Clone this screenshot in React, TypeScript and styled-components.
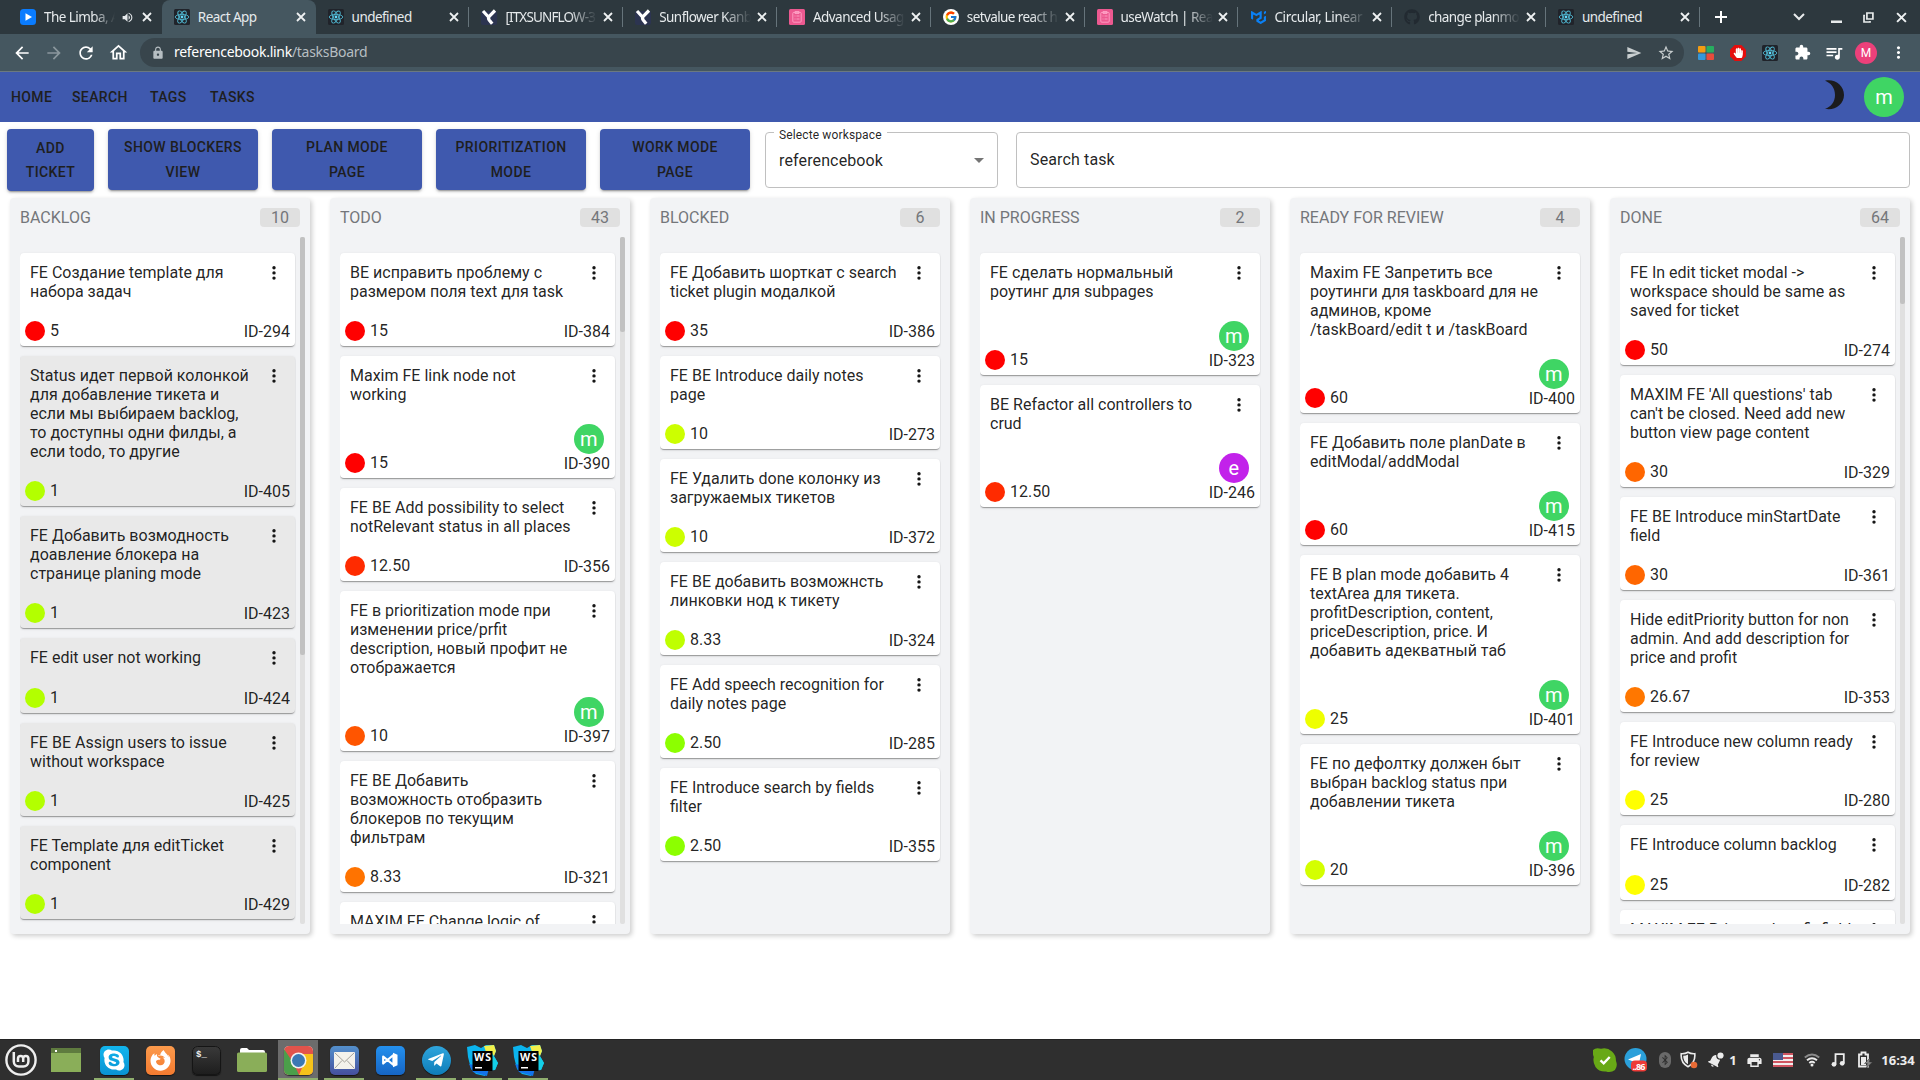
import React from "react";
import styled, { createGlobalStyle } from "styled-components";
import {
  MdArrowBack, MdArrowForward, MdRefresh, MdOutlineHome, MdLock, MdSend, MdStarBorder, MdExtension,
  MdQueueMusic, MdMoreVert, MdVolumeUp, MdArrowDropDown, MdPrint, MdNotifications,
} from "react-icons/md";
import { FaGithub, FaSkype, FaFirefoxBrowser, FaTelegramPlane, FaBluetoothB, FaHandPaper } from "react-icons/fa";
import { FcGoogle } from "react-icons/fc";
import { SiMui } from "react-icons/si";

const Global = createGlobalStyle`
  * { box-sizing: border-box; }
  body { margin: 0; background: #fff; font-family: Roboto, "Noto Sans", sans-serif; overflow: hidden; }
  svg { display: block; flex: none; }
`;

const uiFont = `"Noto Sans", "Open Sans", sans-serif`;

const Screen = styled.div`
  width: 1920px;
  height: 1080px;
  display: flex;
  flex-direction: column;
  background: #fff;
  overflow: hidden;
`;

/* ---------- browser chrome ---------- */

const TabStrip = styled.div`
  height: 34px;
  padding-left: 8px;
  display: flex;
  background: #2d383e;
  font: 13.5px ${uiFont};
  color: #e6eaec;
`;
const TabBox = styled.div<{ $active?: boolean; $line?: boolean }>`
  position: relative;
  width: 153.8px;
  height: 34px;
  padding-left: 12px;
  display: flex;
  align-items: center;
  border-radius: 8px 8px 0 0;
  background: ${(p) => (p.$active ? "#455760" : "transparent")};
  &::after {
    content: "";
    display: ${(p) => (p.$line ? "block" : "none")};
    position: absolute;
    right: 0;
    top: 7px;
    width: 1px;
    height: 20px;
    background: #66747b;
  }
`;
const Favicon = styled.div`
  width: 16px;
  height: 16px;
  margin-right: 8px;
  display: flex;
  align-items: center;
  justify-content: center;
`;
const TabTitle = styled.div<{ $w: number; $fade?: boolean; $ls?: number }>`
  width: ${(p) => p.$w}px;
  line-height: 20px;
  white-space: nowrap;
  letter-spacing: ${(p) => p.$ls ?? -0.55}px;
  mask-image: ${(p) => (p.$fade ? "linear-gradient(90deg, #000 70%, transparent 100%)" : "none")};
`;
const TabAudio = styled.div`
  width: 12px;
  margin-left: 6px;
  margin-right: 8px;
`;
const TabClose = styled.div`
  margin-left: auto;
  margin-right: 10px;
`;
const WindowButtons = styled.div`
  flex: 1;
  display: flex;
  align-items: center;
  color: #f0f2f3;
`;
const WinSlot = styled.div<{ $ml: number }>`
  width: 20px;
  margin-left: ${(p) => p.$ml}px;
  display: flex;
  justify-content: center;
`;

const Toolbar = styled.div`
  height: 38px;
  padding: 4px 6px 4px 6px;
  display: flex;
  align-items: center;
  background: #455760;
  border-bottom: 1px solid #6b7980;
  color: #fff;
`;
const ToolSlot = styled.div<{ $dim?: boolean }>`
  width: 32px;
  display: flex;
  justify-content: center;
  color: ${(p) => (p.$dim ? "#8b979d" : "#fff")};
`;
const Address = styled.div`
  width: 1544px;
  height: 29px;
  margin-left: 6px;
  margin-right: 6px;
  padding: 0 2px 0 11px;
  display: flex;
  align-items: center;
  border-radius: 15px;
  background: #38454c;
  font: 14px/20px ${uiFont};
  color: #b6bec2;
`;
const Url = styled.div`
  flex: 1;
  margin-left: 9px;
  padding-bottom: 2px;
  letter-spacing: -0.28px;
  span { color: #fff; }
`;
const ProfileDot = styled.div`
  width: 22px;
  height: 22px;
  border-radius: 50%;
  background: #ec407a;
  font: 12px/22px Roboto, sans-serif;
  text-align: center;
`;

/* ---------- application ---------- */

const AppBar = styled.div`
  height: 50px;
  padding: 0 16px 0 11px;
  display: flex;
  align-items: center;
  background: #3f59ae;
`;
const NavLink = styled.div<{ $w: number }>`
  width: ${(p) => p.$w}px;
  font: 500 14px/24px Roboto, sans-serif;
  letter-spacing: 0.38px;
  color: #1e1e20;
`;
const Spacer = styled.div`
  flex: 1;
`;
const Avatar = styled.div<{ $size: number; $bg: string; $ml?: number }>`
  width: ${(p) => p.$size}px;
  height: ${(p) => p.$size}px;
  margin-left: ${(p) => p.$ml ?? 0}px;
  border-radius: 50%;
  display: flex;
  align-items: center;
  justify-content: center;
  background: ${(p) => p.$bg};
  color: #fff;
  font-size: 20px;
  line-height: 1;
`;
const MoonBox = styled.div`
  margin: -5px 19px 0 0;
`;

const Controls = styled.div`
  height: 76px;
  padding: 7px 10px 0 7px;
  display: flex;
  align-items: flex-start;
`;
const ActionButton = styled.div<{ $w: number; $h: number; $ml: number }>`
  width: ${(p) => p.$w}px;
  height: ${(p) => p.$h}px;
  margin-left: ${(p) => p.$ml}px;
  display: flex;
  align-items: center;
  justify-content: center;
  border-radius: 4px;
  background: #3f59ae;
  color: #1e1e20;
  font: 500 14px/24.5px Roboto, sans-serif;
  letter-spacing: 0.4px;
  text-align: center;
  white-space: pre-line;
  box-shadow: 0 3px 1px -2px rgba(0, 0, 0, 0.2), 0 2px 2px 0 rgba(0, 0, 0, 0.14), 0 1px 5px 0 rgba(0, 0, 0, 0.12);
`;
const Field = styled.div<{ $w: number; $ml: number; $pb?: number }>`
  position: relative;
  width: ${(p) => p.$w}px;
  height: 56px;
  margin: 3px 0 0 ${(p) => p.$ml}px;
  padding: 0 6px ${(p) => p.$pb ?? 0}px 13px;
  display: flex;
  align-items: center;
  justify-content: space-between;
  border: 1px solid #c0c0c0;
  border-radius: 4px;
  font-size: 16px;
  letter-spacing: 0.13px;
  color: rgba(0, 0, 0, 0.87);
`;
const FieldLabel = styled.div`
  position: absolute;
  left: 8px;
  top: -6px;
  padding: 0 5px;
  background: #fff;
  font-size: 12px;
  line-height: 16px;
`;

const Board = styled.div`
  height: 841px;
  padding: 0 10px;
  display: flex;
  gap: 20px;
  align-items: flex-start;
`;
const ColumnBox = styled.div`
  width: 300px;
  height: 736px;
  padding: 10px 0 10px 10px;
  border-radius: 4px;
  background: #f2f3f5;
  box-shadow: 2px 2px 5px rgba(0, 0, 0, 0.2);
`;
const ColumnHead = styled.div`
  height: 19px;
  margin-bottom: 10px;
  padding-right: 10px;
  display: flex;
  align-items: center;
  justify-content: space-between;
  font-size: 16px;
  line-height: 19px;
  color: #74767a;
`;
const Count = styled.div`
  width: 40px;
  height: 19px;
  border-radius: 4px;
  background: #e0e0e0;
  text-align: center;
`;
const ColumnBody = styled.div`
  height: 687px;
  display: flex;
  overflow: hidden;
`;
const CardList = styled.div<{ $scroll: boolean }>`
  width: ${(p) => (p.$scroll ? 277 : 282)}px;
  margin-left: -1px;
  padding: 16px 1px 0;
  display: flex;
  flex-direction: column;
  gap: 10px;
  overflow: hidden;
`;
const Track = styled.div`
  width: 5px;
  margin-left: 4px;
  border-radius: 2px;
  background: #e0e0e0;
`;
const Thumb = styled.div<{ $h: number }>`
  height: ${(p) => p.$h}px;
  border-radius: 2px;
  background: #c1c1c1;
`;
const CardBox = styled.div<{ $muted?: boolean }>`
  flex: none;
  padding: 10px 5px 5px;
  border-radius: 4px;
  background: ${(p) => (p.$muted ? "#e9e9e9" : "#fff")};
  box-shadow: 0 2px 1px -1px rgba(0, 0, 0, 0.2), 0 1px 1px 0 rgba(0, 0, 0, 0.14), 0 1px 3px 0 rgba(0, 0, 0, 0.12);
  color: rgba(0, 0, 0, 0.87);
  font-size: 16px;
  line-height: 19px;
`;
const CardTop = styled.div`
  min-height: 20px;
  padding: 0 6px 0 5px;
  display: flex;
  justify-content: space-between;
`;
const CardTitle = styled.div`
  white-space: pre;
`;
const CardFoot = styled.div<{ $tall: boolean }>`
  height: ${(p) => (p.$tall ? 69 : 40)}px;
  display: flex;
  align-items: flex-end;
  justify-content: space-between;
`;
const Score = styled.div`
  height: 20px;
  display: flex;
  gap: 5px;
`;
const Dot = styled.div<{ $c: string }>`
  width: 20px;
  height: 20px;
  border-radius: 50%;
  background: ${(p) => p.$c};
`;
const Owner = styled.div`
  display: flex;
  flex-direction: column;
  align-items: center;
`;

/* ---------- desktop panel ---------- */

const Panel = styled.div`
  height: 41px;
  display: flex;
  align-items: center;
  background: #2f2f2f;
  border-top: 1px solid #232323;
`;
const Launcher = styled.div<{ $w?: number; $mr?: number; $active?: boolean; $running?: boolean }>`
  width: ${(p) => p.$w ?? 40}px;
  height: 40px;
  margin-right: ${(p) => p.$mr ?? 6}px;
  display: flex;
  align-items: center;
  justify-content: center;
  background: ${(p) => (p.$active ? "#6c6c6c" : "transparent")};
  box-shadow: ${(p) => (p.$running ? "inset 0 -2px 0 #8fae6e" : "none")};
`;
const Tile = styled.div<{ $bg: string; $round?: boolean }>`
  width: 29px;
  height: 29px;
  display: flex;
  align-items: center;
  justify-content: center;
  overflow: hidden;
  border-radius: ${(p) => (p.$round ? "50%" : "5px")};
  background: ${(p) => p.$bg};
  box-shadow: 0 1px 1px rgba(0, 0, 0, 0.6);
  color: #fff;
`;
const TraySlot = styled.div<{ $w: number; $ml: number }>`
  width: ${(p) => p.$w}px;
  margin-left: ${(p) => p.$ml}px;
  display: flex;
  justify-content: center;
  color: #ececec;
  font: 700 13px/20px ${uiFont};
`;

/* ---------- drawings ---------- */

const Cross = ({ size = 10 }: { size?: number }) => (
  <svg width={size} height={size} viewBox="0 0 10 10">
    <path d="M1 1l8 8M9 1L1 9" fill="none" stroke="#eef1f2" strokeWidth="1.8" />
  </svg>
);
const ReactLogo = () => (
  <svg width="16" height="16" viewBox="0 0 16 16">
    <rect width="16" height="16" rx="1.5" fill="#20232a" />
    <g fill="none" stroke="#4fb6cf" strokeWidth="0.9">
      <ellipse cx="8" cy="8" rx="6.8" ry="2.6" />
      <ellipse cx="8" cy="8" rx="6.8" ry="2.6" transform="rotate(60 8 8)" />
      <ellipse cx="8" cy="8" rx="6.8" ry="2.6" transform="rotate(120 8 8)" />
    </g>
    <circle cx="8" cy="8" r="1.4" fill="#61dafb" />
  </svg>
);
const PlayLogo = () => (
  <svg width="16" height="16" viewBox="0 0 16 16">
    <rect width="16" height="16" rx="3.5" fill="#0a7cff" />
    <path d="M5.5 4.2v7.6L12 8z" fill="#fff" />
  </svg>
);
const TrackerLogo = () => (
  <svg width="16" height="16" viewBox="0 0 16 16">
    <rect y="2" width="16" height="14" rx="2" fill="#2c3450" />
    <path d="M2 2l5 5.500M14 1.500L8.500 7q-1.800 2-.3 4l3 3.800" fill="none" stroke="#fff" strokeWidth="3.2" />
  </svg>
);
const ClipLogo = () => (
  <svg width="16" height="16" viewBox="0 0 16 16">
    <rect width="16" height="16" rx="1.5" fill="#ec5990" />
    <g fill="none" stroke="#ffa3c6" strokeWidth="0.9">
      <rect x="3.8" y="3.4" width="8.4" height="9.8" rx="1" />
      <path d="M6 2.5h4v2H6zM5.5 7h1M7.5 7h3M5.5 10h1M7.5 10h3" />
    </g>
  </svg>
);
const GoogleDisc = () => (
  <svg width="16" height="16" viewBox="0 0 16 16">
    <circle cx="8" cy="8" r="8" fill="#fff" />
    <FcGoogle x="1.5" y="1.5" size={13} />
  </svg>
);
const Moon = () => (
  <svg width="20" height="30" viewBox="0 0 20 30">
    <path d="M0 .8C9-1.5 19 5 19 15S9 31 0 28.8C6 27 10 22 10 15S6 3 0 .8z" fill="#1b1b1d" />
  </svg>
);
const Kebab = () => (
  <svg width="20" height="19" viewBox="0 0 20 19">
    <g fill="#161616">
      <circle cx="10" cy="4.7" r="1.7" />
      <circle cx="10" cy="9.9" r="1.7" />
      <circle cx="10" cy="15.1" r="1.7" />
    </g>
  </svg>
);
const MintLogo = () => (
  <svg width="32" height="32" viewBox="0 0 32 32" fill="none" stroke="#efefef">
    <circle cx="16" cy="16" r="14.6" strokeWidth="2.4" />
    <path
      d="M8.800 8v9.500a5 5 0 0 0 5 5h4.600a5 5 0 0 0 5-5v-3a2.600 2.600 0 0 0-5.200 0V18v-3.500a2.600 2.600 0 0 0-5.200 0V18"
      strokeWidth="2.5"
    />
  </svg>
);
const DesktopIcon = () => (
  <svg width="30" height="24" viewBox="0 0 30 24">
    <rect width="30" height="24" fill="#8aae59" />
    <rect width="30" height="5" fill="#5f7b3f" />
    <rect x="4" y="2" width="2" height="2" fill="#fff" />
  </svg>
);
const FolderIcon = () => (
  <svg width="30" height="26" viewBox="0 0 30 26">
    <path d="M3 7V3q0-2 2-2h5l2 2h14q2 0 2 2v4z" fill="#fff" />
    <rect y="5.5" width="30" height="19.5" rx="1.5" fill="#8aae59" />
  </svg>
);
const ChromeIcon = () => (
  <svg width="29" height="29" viewBox="0 0 29 29">
    <rect width="29" height="29" fill="#e2534b" />
    <path d="M0 3l10 15 5 11H0z" fill="#4b9f4a" />
    <path d="M14.5 8H29v21H15l5-12z" fill="#f6c21a" />
    <circle cx="14.5" cy="14.5" r="8" fill="#f3f3f3" />
    <circle cx="14.5" cy="14.5" r="6.5" fill="#3c78b4" />
  </svg>
);
const MailIcon = () => (
  <svg width="21" height="17" viewBox="0 0 21 17">
    <rect width="21" height="17" rx="1" fill="#f4f2ec" />
    <path d="M1 1l9.500 9L20 1M1 16l7-7.500M20 16l-7-7.500" fill="none" stroke="#a5a29b" strokeWidth="1" />
  </svg>
);
const CodeIcon = () => (
  <svg width="18" height="16" viewBox="0 0 18 16">
    <path d="M2.200 4.500L12.500 13V3L2.200 11.500z" fill="none" stroke="#fff" strokeWidth="2.2" strokeLinejoin="round" />
    <path d="M12 .8l4.500 2v10.400l-4.500 2z" fill="#fff" />
  </svg>
);
const WebStormIcon = () => (
  <svg width="33" height="33" viewBox="0 0 33 33">
    <path d="M1 3l8-2 6 3 5-3 8 0 2 6-2 5 4 7-3 7-7 1-3 5-9-2-5-5-3-12z" fill="#0bb4ee" />
    <path d="M18 2l10-1 2 6-2 5-8-4z" fill="#f3f04a" />
    <path d="M26 9l6 10-3 7-6-1z" fill="#14d0e8" />
    <path d="M3 20l4 8 14 4 2-8z" fill="#1273ea" />
    <rect x="6.5" y="7" width="20" height="20" fill="#000" />
    <text x="8" y="16.5" fill="#fff" fontFamily="Open Sans, sans-serif" fontWeight="700" fontSize="10.5" textLength="17">WS</text>
    <rect x="9" y="23" width="7" height="1.5" fill="#fff" />
  </svg>
);
const SkypeTray = () => (
  <svg width="24" height="24" viewBox="0 0 24 24">
    <path d="M0 2Q3-1 8 .8 14-1 19 3.500 23 7 23 13q2 5-1 9-4 3-9 1.500Q6 24 2.500 19-.5 14 .8 9-.8 5 0 2z" fill="#68a916" />
    <path d="M7.500 12.300l3.200 3 6-6.300" fill="none" stroke="#fff" strokeWidth="2.4" />
  </svg>
);
const TelegramTray = () => (
  <svg width="24" height="24" viewBox="0 0 24 24">
    <circle cx="11.5" cy="11" r="11" fill="#2ba0da" />
    <path d="M4 11.500L17 6l-2.500 12-4-4z" fill="#fff" />
    <rect x="7" y="12.5" width="16" height="11" rx="4" fill="#ee3b37" />
    <text x="8.5" y="21.5" fill="#fff" fontSize="9" fontFamily="Open Sans, sans-serif" textLength="13">..86</text>
  </svg>
);
const ShieldIcon = () => (
  <svg width="18" height="18" viewBox="0 0 18 18">
    <path d="M8 1.200q3 1.800 6.800 1.500.8 9-6.800 13Q.4 11.700 1.200 2.700 5 3 8 1.200z" fill="none" stroke="#ececec" strokeWidth="1.6" />
    <path d="M8 3.500v9.800Q3 10.500 3.200 4.800 6 4.800 8 3.500z" fill="#ececec" />
    <circle cx="14" cy="14" r="3.3" fill="#e96b35" />
  </svg>
);
const BellIcon = () => (
  <svg width="16" height="16" viewBox="0 0 16 16">
    <g transform="rotate(28 8 8)">
      <MdNotifications x="-1" y="0" size={17} color="#ececec" />
    </g>
    <circle cx="12.2" cy="3.8" r="4" fill="#2f2f2f" />
    <circle cx="12.5" cy="3.5" r="3.1" fill="#ececec" />
  </svg>
);
const FlagIcon = () => (
  <svg width="20" height="14" viewBox="0 0 20 14">
    <rect width="20" height="14" fill="#f2eded" />
    {[0, 4, 8, 12].map((y) => (
      <rect key={y} y={y} width="20" height="2" fill="#cf5560" />
    ))}
    <rect width="10" height="7" fill="#4a5a90" />
  </svg>
);
const WifiIcon = () => (
  <svg width="16" height="14" viewBox="0 0 16 14" fill="none" strokeWidth="1.9">
    <path d="M.8 4.500Q8-1.500 15.200 4.500" stroke="#8b8b8b" />
    <path d="M3 7.300Q8 3 13 7.300M5.300 10Q8 7.700 10.700 10" stroke="#ececec" />
    <circle cx="8" cy="12" r="1.5" fill="#ececec" />
  </svg>
);
const NoteIcon = () => (
  <svg width="14" height="14" viewBox="0 0 14 14">
    <path d="M4.500 11V1.200h8.300V10" fill="none" stroke="#ececec" strokeWidth="1.8" />
    <circle cx="3" cy="11.3" r="2.4" fill="#ececec" />
    <circle cx="11.2" cy="10.3" r="2.4" fill="#ececec" />
  </svg>
);
const BatteryIcon = () => (
  <svg width="16" height="18" viewBox="0 0 16 18">
    <path d="M2 3.500h2.500v-2h4v2H11v12H2z" fill="none" stroke="#ececec" strokeWidth="1.8" />
    <path d="M4 6h5v8H4z" fill="#ececec" />
    <path d="M13 7l-5.500 5.500h3l-1 4.500 6-6h-3z" fill="#858585" stroke="#2f2f2f" strokeWidth=".5" />
  </svg>
);
const ExtensionTiles = () => (
  <svg width="16" height="14" viewBox="0 0 16 14">
    <rect width="7.5" height="6.5" rx="1" fill="#f39c12" />
    <rect x="8.5" width="7.5" height="6.5" rx="1" fill="#27ae60" />
    <rect y="7.5" width="7.5" height="6.5" rx="1" fill="#3498db" />
    <rect x="8.5" y="7.5" width="7.5" height="6.5" rx="1" fill="#e74c3c" />
  </svg>
);
const Blocker = () => (
  <svg width="16" height="16" viewBox="0 0 16 16">
    <path d="M4.700 0h6.600L16 4.700v6.600L11.300 16H4.700L0 11.300V4.700z" fill="#e40d0d" />
    <FaHandPaper x="3" y="2.5" size={10.5} color="#fff" />
  </svg>
);
const BluetoothIcon = () => (
  <svg width="12" height="16" viewBox="0 0 12 16">
    <rect width="12" height="16" rx="6" fill="#6a6a6a" />
    <FaBluetoothB x="0.5" y="2.5" size={11} color="#2f2f2f" />
  </svg>
);

/* ---------- data ---------- */

type TabInfo = { icon: React.ReactNode; title: string; w: number; fade?: boolean; active?: boolean; line?: boolean; audio?: boolean; ls?: number };
const tabs: TabInfo[] = [
  { icon: <PlayLogo />, title: "The Limba, A", w: 71, fade: true, audio: true },
  { icon: <ReactLogo />, title: "React App", w: 90, active: true },
  { icon: <ReactLogo />, title: "undefined", w: 90, line: true },
  { icon: <TrackerLogo />, title: "[ITXSUNFLOW-3", w: 92, fade: true, line: true, ls: -0.85 },
  { icon: <TrackerLogo />, title: "Sunflower Kanb", w: 92, fade: true, line: true },
  { icon: <ClipLogo />, title: "Advanced Usag", w: 92, fade: true, line: true },
  { icon: <GoogleDisc />, title: "setvalue react h", w: 92, fade: true, line: true, ls: -0.6 },
  { icon: <ClipLogo />, title: "useWatch | Rea", w: 92, fade: true, line: true },
  { icon: <SiMui size={15} color="#0a80f5" />, title: "Circular, Linear", w: 92, fade: true, line: true, ls: -0.35 },
  { icon: <FaGithub size={16} color="#222a31" />, title: "change planmo", w: 92, fade: true, line: true, ls: -0.6 },
  { icon: <ReactLogo />, title: "undefined", w: 90, line: true },
];

type Task = { t: string; s: string; c: string; id: number; who?: "m" | "e"; muted?: boolean };
type Col = { name: string; count: number; thumb?: number; tasks: Task[] };
const lime = "#b3ff00";
const columns: Col[] = [
  {
    name: "BACKLOG", count: 10, thumb: 418,
    tasks: [
      { t: "FE Создание template для\nнабора задач", s: "5", c: "#ff0000", id: 294 },
      { t: "Status идет первой колонкой\nдля добавление тикета и\nесли мы выбираем backlog,\nто доступны одни филды, а\nесли todo, то другие", s: "1", c: lime, id: 405, muted: true },
      { t: "FE Добавить возмодность\nдоавление блокера на\nстранице planing mode", s: "1", c: lime, id: 423, muted: true },
      { t: "FE edit user not working", s: "1", c: lime, id: 424, muted: true },
      { t: "FE BE Assign users to issue\nwithout workspace", s: "1", c: lime, id: 425, muted: true },
      { t: "FE Template для editTicket\ncomponent", s: "1", c: lime, id: 429, muted: true },
    ],
  },
  {
    name: "TODO", count: 43, thumb: 95,
    tasks: [
      { t: "BE исправить проблему с\nразмером поля text для task", s: "15", c: "#ff0000", id: 384 },
      { t: "Maxim FE link node not\nworking", s: "15", c: "#ff0000", id: 390, who: "m" },
      { t: "FE BE Add possibility to select\nnotRelevant status in all places", s: "12.50", c: "#ff2b00", id: 356 },
      { t: "FE в prioritization mode при\nизменении price/prfit\ndescription, новый профит не\nотображается", s: "10", c: "#ff5500", id: 397, who: "m" },
      { t: "FE BE Добавить\nвозможность отобразить\nблокеров по текущим\nфильтрам", s: "8.33", c: "#ff7300", id: 321 },
      { t: "MAXIM FE Change logic of", s: "8.33", c: "#ff7300", id: 320 },
    ],
  },
  {
    name: "BLOCKED", count: 6,
    tasks: [
      { t: "FE Добавить шорткат с search\nticket plugin модалкой", s: "35", c: "#ff0000", id: 386 },
      { t: "FE BE Introduce daily notes\npage", s: "10", c: "#ccff00", id: 273 },
      { t: "FE Удалить done колонку из\nзагружаемых тикетов", s: "10", c: "#ccff00", id: 372 },
      { t: "FE BE добавить возможнсть\nлинковки нод к тикету", s: "8.33", c: "#bfff00", id: 324 },
      { t: "FE Add speech recognition for\ndaily notes page", s: "2.50", c: "#8cff00", id: 285 },
      { t: "FE Introduce search by fields\nfilter", s: "2.50", c: "#8cff00", id: 355 },
    ],
  },
  {
    name: "IN PROGRESS", count: 2,
    tasks: [
      { t: "FE сделать нормальный\nроутинг для subpages", s: "15", c: "#ff0000", id: 323, who: "m" },
      { t: "BE Refactor all controllers to\ncrud", s: "12.50", c: "#ff2b00", id: 246, who: "e" },
    ],
  },
  {
    name: "READY FOR REVIEW", count: 4,
    tasks: [
      { t: "Maxim FE Запретить все\nроутинги для taskboard для не\nадминов, кроме\n/taskBoard/edit t и /taskBoard", s: "60", c: "#ff0000", id: 400, who: "m" },
      { t: "FE Добавить поле planDate в\neditModal/addModal", s: "60", c: "#ff0000", id: 415, who: "m" },
      { t: "FE В plan mode добавить 4\ntextArea для тикета.\nprofitDescription, content,\npriceDescription, price. И\nдобавить адекватный таб", s: "25", c: "#eeff00", id: 401, who: "m" },
      { t: "FE по дефолтку должен быт\nвыбран backlog status при\nдобавлении тикета", s: "20", c: "#d4ff00", id: 396, who: "m" },
    ],
  },
  {
    name: "DONE", count: 64, thumb: 67,
    tasks: [
      { t: "FE In edit ticket modal ->\nworkspace should be same as\nsaved for ticket", s: "50", c: "#ff0000", id: 274 },
      { t: "MAXIM FE 'All questions' tab\ncan't be closed. Need add new\nbutton view page content", s: "30", c: "#ff6600", id: 329 },
      { t: "FE BE Introduce minStartDate\nfield", s: "30", c: "#ff6600", id: 361 },
      { t: "Hide editPriority button for non\nadmin. And add description for\nprice and profit", s: "26.67", c: "#ff7700", id: 353 },
      { t: "FE Introduce new column ready\nfor review", s: "25", c: "#ffff00", id: 280 },
      { t: "FE Introduce column backlog", s: "25", c: "#ffff00", id: 282 },
      { t: "MAXIM FE Price and profit field", s: "25", c: "#ffff00", id: 283 },
    ],
  },
];

const avatarColor = { m: "#3fd564", e: "#c222ea" };

const TaskCard = ({ task }: { task: Task }) => (
  <CardBox $muted={task.muted}>
    <CardTop>
      <CardTitle>{task.t}</CardTitle>
      <Kebab />
    </CardTop>
    <CardFoot $tall={!!task.who}>
      <Score>
        <Dot $c={task.c} />
        {task.s}
      </Score>
      <Owner>
        {task.who && (
          <Avatar $size={30} $ml={4} $bg={avatarColor[task.who]}>
            {task.who}
          </Avatar>
        )}
        ID-{task.id}
      </Owner>
    </CardFoot>
  </CardBox>
);

const Column = ({ col }: { col: Col }) => (
  <ColumnBox>
    <ColumnHead>
      {col.name}
      <Count>{col.count}</Count>
    </ColumnHead>
    <ColumnBody>
      <CardList $scroll={!!col.thumb}>
        {col.tasks.map((t) => (
          <TaskCard key={t.id} task={t} />
        ))}
      </CardList>
      {col.thumb && (
        <Track>
          <Thumb $h={col.thumb} />
        </Track>
      )}
    </ColumnBody>
  </ColumnBox>
);

const modeButtons = ["SHOW BLOCKERS\nVIEW", "PLAN MODE\nPAGE", "PRIORITIZATION\nMODE", "WORK MODE\nPAGE"];

export default function App() {
  return (
    <Screen>
      <Global />
      <TabStrip>
        {tabs.map((t, i) => (
          <TabBox key={i} $active={t.active} $line={t.line}>
            <Favicon>{t.icon}</Favicon>
            <TabTitle $w={t.w} $fade={t.fade} $ls={t.ls}>{t.title}</TabTitle>
            {t.audio && (
              <TabAudio>
                <MdVolumeUp size={13} />
              </TabAudio>
            )}
            <TabClose>
              <Cross />
            </TabClose>
          </TabBox>
        ))}
        <WindowButtons>
          <WinSlot $ml={11}>
            <svg width="12" height="12" viewBox="0 0 12 12"><path d="M6 0v12M0 6h12" stroke="#fff" strokeWidth="2" /></svg>
          </WinSlot>
          <WinSlot $ml={58}>
            <svg width="12" height="8" viewBox="0 0 12 8"><path d="M1 1l5 5 5-5" fill="none" stroke="#e8ebec" strokeWidth="2" /></svg>
          </WinSlot>
          <WinSlot $ml={18}>
            <svg width="11" height="12" viewBox="0 0 11 12"><rect y="9.5" width="11" height="2.5" fill="#e8ebec" /></svg>
          </WinSlot>
          <WinSlot $ml={12}>
            <svg width="11" height="11" viewBox="0 0 11 11" fill="none" stroke="#e8ebec" strokeWidth="1.7"><path d="M3.900 1h6v6h-6zM2 3.500H1V10h6V9" /></svg>
          </WinSlot>
          <WinSlot $ml={13}><Cross size={11} /></WinSlot>
        </WindowButtons>
      </TabStrip>
      <Toolbar>
        <ToolSlot><MdArrowBack size={20} /></ToolSlot>
        <ToolSlot $dim><MdArrowForward size={20} /></ToolSlot>
        <ToolSlot><MdRefresh size={20} /></ToolSlot>
        <ToolSlot><MdOutlineHome size={21} /></ToolSlot>
        <Address>
          <MdLock size={14} />
          <Url><span>referencebook.link</span>/tasksBoard</Url>
          <ToolSlot><MdSend size={16} color="#c8cecf" /></ToolSlot>
          <ToolSlot><MdStarBorder size={18} color="#c8cecf" /></ToolSlot>
        </Address>
        <ToolSlot><ExtensionTiles /></ToolSlot>
        <ToolSlot><Blocker /></ToolSlot>
        <ToolSlot><ReactLogo /></ToolSlot>
        <ToolSlot><MdExtension size={17} /></ToolSlot>
        <ToolSlot><MdQueueMusic size={20} /></ToolSlot>
        <ToolSlot><ProfileDot>M</ProfileDot></ToolSlot>
        <ToolSlot><MdMoreVert size={19} /></ToolSlot>
      </Toolbar>

      <AppBar>
        <NavLink $w={61}>HOME</NavLink>
        <NavLink $w={78}>SEARCH</NavLink>
        <NavLink $w={60}>TAGS</NavLink>
        <NavLink $w={60}>TASKS</NavLink>
        <Spacer />
        <MoonBox><Moon /></MoonBox>
        <Avatar $size={40} $bg="#3fd564">m</Avatar>
      </AppBar>
      <Controls>
        <ActionButton $w={87} $h={62} $ml={0}>{"ADD\nTICKET"}</ActionButton>
        {modeButtons.map((b) => (
          <ActionButton key={b} $w={150} $h={61} $ml={14}>{b}</ActionButton>
        ))}
        <Field $w={233} $ml={15}>
          <FieldLabel>Selecte workspace</FieldLabel>
          referencebook
          <MdArrowDropDown size={24} color="#757575" />
        </Field>
        <Field $w={894} $ml={18} $pb={2}>Search task</Field>
      </Controls>
      <Board>
        {columns.map((c) => (
          <Column key={c.name} col={c} />
        ))}
      </Board>

      <Panel>
        <Launcher $w={42} $mr={4}><MintLogo /></Launcher>
        <Launcher $mr={8}><DesktopIcon /></Launcher>
        <Launcher $running><Tile $bg="linear-gradient(#12b5ee,#0993d2)"><FaSkype size={24} /></Tile></Launcher>
        <Launcher><Tile $bg="linear-gradient(#fb9a4c,#f47b30)"><FaFirefoxBrowser size={21} /></Tile></Launcher>
        <Launcher>
          <Tile $bg="linear-gradient(#3a3a3a,#1d1d1d)">
            <svg width="29" height="29" viewBox="0 0 29 29">
              <rect x=".5" y=".5" width="28" height="28" rx="5" fill="none" stroke="#151515" />
              <text x="4" y="11" fill="#eee" fontSize="9" fontWeight="700" fontFamily="Liberation Mono, monospace">$_</text>
            </svg>
          </Tile>
        </Launcher>
        <Launcher><FolderIcon /></Launcher>
        <Launcher $active $running><Tile $bg="#fff"><ChromeIcon /></Tile></Launcher>
        <Launcher $running><Tile $bg="linear-gradient(#5490cc,#454f9e)"><MailIcon /></Tile></Launcher>
        <Launcher><Tile $bg="linear-gradient(#2490ee,#1665c4)"><CodeIcon /></Tile></Launcher>
        <Launcher $running><Tile $round $bg="linear-gradient(#2fa5dd,#0e7db8)"><FaTelegramPlane size={18} /></Tile></Launcher>
        <Launcher $running><WebStormIcon /></Launcher>
        <Launcher $running><WebStormIcon /></Launcher>
        <Spacer />
        <TraySlot $w={24} $ml={0}><SkypeTray /></TraySlot>
        <TraySlot $w={24} $ml={7}><TelegramTray /></TraySlot>
        <TraySlot $w={12} $ml={11}><BluetoothIcon /></TraySlot>
        <TraySlot $w={18} $ml={9}><ShieldIcon /></TraySlot>
        <TraySlot $w={16} $ml={10}><BellIcon /></TraySlot>
        <TraySlot $w={8} $ml={5}>1</TraySlot>
        <TraySlot $w={16} $ml={9}><MdPrint size={17} /></TraySlot>
        <TraySlot $w={20} $ml={11}><FlagIcon /></TraySlot>
        <TraySlot $w={16} $ml={11}><WifiIcon /></TraySlot>
        <TraySlot $w={14} $ml={11}><NoteIcon /></TraySlot>
        <TraySlot $w={16} $ml={12}><BatteryIcon /></TraySlot>
        <TraySlot $w={36} $ml={7}>16:34</TraySlot>
        <TraySlot $w={4} $ml={0} />
      </Panel>
    </Screen>
  );
}
